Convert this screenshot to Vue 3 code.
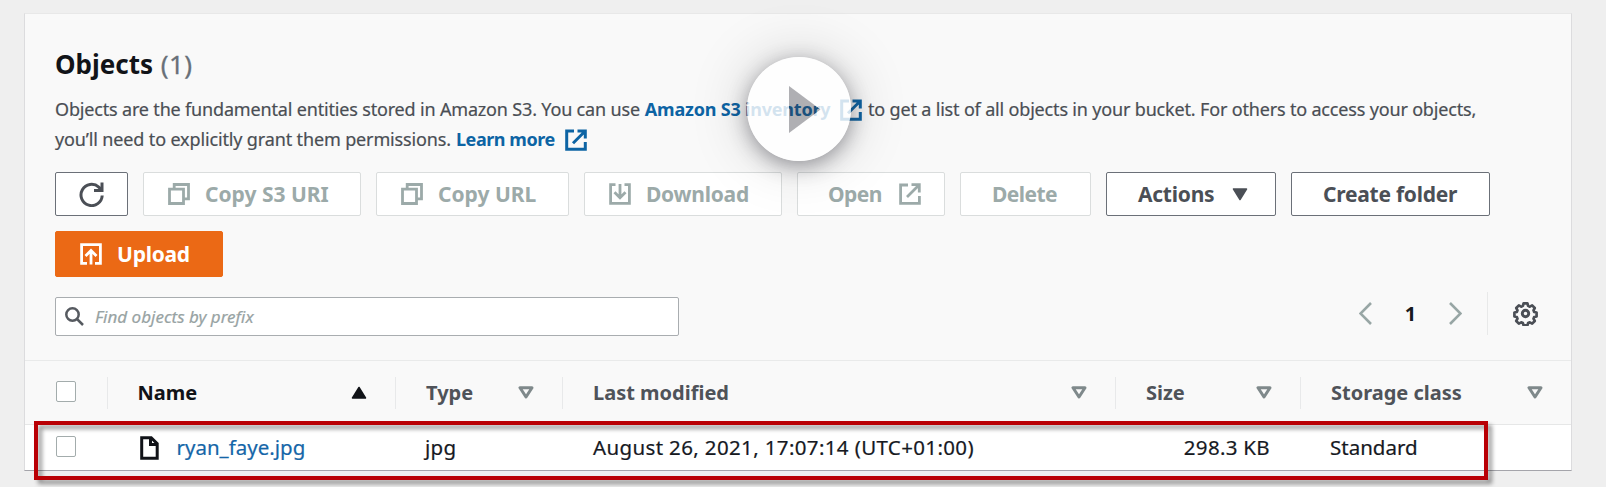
<script setup>
const columns = [
  { key: 'name', label: 'Name', sorted: true },
  { key: 'type', label: 'Type' },
  { key: 'modified', label: 'Last modified' },
  { key: 'size', label: 'Size' },
  { key: 'storage', label: 'Storage class' },
]
const rows = [
  { name: 'ryan_faye.jpg', type: 'jpg', modified: 'August 26, 2021, 17:07:14 (UTC+01:00)', size: '298.3 KB', storage: 'Standard' },
]
</script>

<template>
  <main class="page">
    <section class="panel">
      <header class="head">
        <h2>Objects <span class="count">(1)</span></h2>
        <p class="desc">
          <span class="t1">Objects are the fundamental entities stored in Amazon S3. You can use</span>
          <a class="inv">Amazon S3 inventory<svg class="ext" viewBox="0 0 22 22"><path d="M9 2H1.700v18.300h18.600V13M12.500 2h7.800v7.500M20 2.300 8 14.300" /></svg></a>
          <span class="t2">to get a list of all objects in your bucket. For others to access your objects,</span><br>
          <span class="t3">you’ll need to explicitly grant them permissions.</span>
          <a class="learn">Learn more<svg class="ext" viewBox="0 0 22 22"><path d="M9 2H1.700v18.300h18.600V13M12.500 2h7.800v7.500M20 2.300 8 14.300" /></svg></a>
        </p>
        <div class="actions">
          <button class="btn refresh"><svg class="i25" viewBox="0 0 25 25"><path d="M23.200 13.500A10.600 10.600 0 1 1 19.800 5.200L22 7.500M23 .5v8h-8" /></svg></button>
          <button class="btn off w218"><svg class="i22" viewBox="0 0 22 22"><path d="M1.500 6.200h14v14.300h-14zM6.200 6V1.500h14.300v14.300h-4.500" /></svg><span class="wide">Copy S3 URI</span></button>
          <button class="btn off w193"><svg class="i22" viewBox="0 0 22 22"><path d="M1.500 6.200h14v14.300h-14zM6.200 6V1.500h14.300v14.300h-4.500" /></svg><span class="wide">Copy URL</span></button>
          <button class="btn off w198"><svg class="i22" viewBox="0 0 22 22"><path d="M6.500 1.700H1.600v18.700h18.800V1.700h-4.900M11 1v13.500M5.500 9.300l5.500 5.500 5.500-5.500" /></svg><span>Download</span></button>
          <button class="btn off w148 text"><span class="tight">Open</span><svg class="i22" viewBox="0 0 22 22"><path d="M9 2H1.600v18.400h18.800V13M12.500 1.700h7.800v7.800M20 2 8 14" /></svg></button>
          <button class="btn off w131 text"><span class="tight">Delete</span></button>
          <button class="btn w170 text"><span>Actions</span><svg class="caret" viewBox="0 0 16 13"><path d="M1.500 1h13L8 11.500z" /></svg></button>
          <button class="btn w199 text"><span>Create folder</span></button>
          <button class="btn primary"><svg class="i22" viewBox="0 0 22 22"><path d="M7 20.300H1.600V1.700h18.800v18.600H15M11 21.500V8M5.500 13l5.500-5.500 5.500 5.500" /></svg><span>Upload</span></button>
        </div>
        <div class="tools">
          <label class="search"><svg viewBox="0 0 19 19"><circle cx="7.500" cy="7.500" r="6.200" /><path d="m12 12 6 6" /></svg><span>Find objects by prefix</span></label>
          <nav class="pager">
            <svg class="chev" viewBox="0 0 13 23"><path d="M12 1 1.500 11.500 12 22" /></svg>
            <b>1</b>
            <svg class="chev" viewBox="0 0 13 23"><path d="M1 1l10.500 10.500L1 22" /></svg>
            <i class="bar"></i>
            <svg class="gear" viewBox="0 0 24 24"><path d="M10 1.500h4l.7 2.600 1.800.8 2.400-1.300 2.700 2.700-1.300 2.400.7 1.700 2.500.6v4l-2.500.7-.7 1.700 1.300 2.400-2.700 2.700-2.400-1.300-1.800.7-.7 2.500h-4l-.7-2.500-1.800-.7-2.400 1.300-2.700-2.700 1.300-2.400-.7-1.700-2.500-.7v-4l2.500-.6.7-1.700-1.300-2.400 2.700-2.700 2.400 1.300 1.800-.8z" transform="translate(.9 .9) scale(.925)" /><circle cx="12" cy="12" r="3.100" /></svg>
          </nav>
        </div>
      </header>

      <div class="grid thead">
        <div class="cell first"><i class="box"></i></div>
        <div v-for="c in columns" :key="c.key" class="cell" :class="{ sorted: c.sorted }">
          <span>{{ c.label }}</span>
          <svg class="sort" viewBox="0 0 16 13"><path v-if="c.sorted" d="M8 1.500 14.500 12h-13z" /><path v-else d="M2 1.700h12L8 11z" /></svg>
        </div>
      </div>
      <div v-for="r in rows" :key="r.name" class="grid row">
        <div class="first"><i class="box"></i></div>
        <div class="name"><svg viewBox="0 0 19 24"><path d="M1.700 1.700h9.500l6 6v14.600H1.700zM10.500 2v6.500H17" /></svg><a>{{ r.name }}</a></div>
        <div class="type">{{ r.type }}</div>
        <div class="date">{{ r.modified }}</div>
        <div class="size">{{ r.size }}</div>
        <div class="storage">{{ r.storage }}</div>
      </div>
    </section>

    <div class="highlight"></div>
    <div class="play">
      <svg viewBox="0 0 104 104">
        <path class="disc" fill-rule="evenodd" d="M52 0a52 52 0 1 1 0 104A52 52 0 1 1 52 0zM42 29v47l31.500-23.500z" />
        <path class="tri" d="M42 29v47l31.500-23.500z" />
      </svg>
    </div>
  </main>
</template>

<style>
body { background: #efefef; }
</style>

<style scoped>
* { box-sizing: border-box; }
.page { position: relative; height: 487px; overflow: hidden; padding: 13px 34px 0 24px; background: #efefef; font-family: "Noto Sans", sans-serif; color: #16191f; }
.panel { height: 458px; border: 1px solid #dcdcde; border-top-color: #e8e8e8; border-bottom: 1.500px solid #a4a4aa; background: #f9f9f9; }
svg { display: block; flex: none; fill: none; stroke: currentColor; }
.head { height: 347px; padding: 32px 30px 0; border-bottom: 1px solid #e9eaea; }
h2 { margin: 0; font-size: 26px; line-height: 36px; font-weight: 700; color: #111318; letter-spacing: 0; }
.count { margin-left: 1px; font-weight: 400; color: #687078; letter-spacing: .4px; -webkit-text-stroke: .3px; }
.desc { margin: 12px 0 0; font-size: 18px; line-height: 30px; color: #4a4e54; white-space: nowrap; }
.t1, .t2, .t3 { -webkit-text-stroke: .2px; }
.t1 { letter-spacing: -.17px; }
.t2 { margin-left: 4.500px; letter-spacing: -.17px; }
.t3 { letter-spacing: -.14px; }
.desc a { margin-left: 5px; color: #0d64a4; font-weight: 700; letter-spacing: -.2px; }
.desc a.learn { letter-spacing: -.45px; }
.ext { display: inline-block; width: 22px; height: 22px; margin: 0 1px 0 10px; vertical-align: -5px; stroke-width: 3; }
.actions { display: flex; flex-wrap: wrap; gap: 15px; margin-top: 18px; width: 1436px; }
.btn { display: flex; align-items: center; height: 44px; margin: 0; padding: 0 0 0 24px; gap: 15px; border: 1px solid #6b7078; border-radius: 2px; background: #fff; color: #4b4f56; font: 700 21px/42px "Noto Sans", sans-serif; letter-spacing: -.25px; white-space: nowrap; }
.btn.text { padding-left: 31px; }
.btn.off { color: #9caaa9; border-color: #dadddd; }
.wide { letter-spacing: 0; }
.tight { letter-spacing: -.55px; }
.refresh { width: 73px; padding-left: 23px; }
.w218 { width: 218px; }
.w193 { width: 193px; }
.w198 { width: 198px; }
.btn.w148 { width: 148px; padding-left: 30px; gap: 17px; }
.w131 { width: 131px; }
.w170 { width: 170px; gap: 18px; }
.w199 { width: 199px; }
.primary { width: 168px; height: 46px; border-color: #eb6915; background: #eb6915; color: #fff; }
.i25 { width: 25px; height: 25px; stroke-width: 3; }
.i22 { width: 22px; height: 22px; stroke-width: 2.800; }
.caret { width: 16px; height: 13px; fill: currentColor; stroke-width: 1.500; stroke-linejoin: round; }
.tools { display: flex; justify-content: space-between; align-items: flex-start; margin-top: 20px; }
.search { display: flex; align-items: center; width: 624px; height: 39px; padding-left: 9px; gap: 11px; border: 1px solid #a9adb0; border-radius: 2px; background: #fff; color: #98a3a3; font-size: 17px; font-style: italic; letter-spacing: 0; -webkit-text-stroke: .2px; }
.search svg { width: 19px; height: 19px; color: #565a60; stroke-width: 2.500; }
.pager { display: flex; align-items: center; height: 43px; margin: -5px 3px 0 0; font-size: 20px; }
.chev { width: 13px; height: 23px; color: #98a6a5; stroke-width: 2.600; }
.pager b { width: 77px; text-align: center; }
.bar { width: 1px; height: 43px; margin: 0 25px; background: #e8e9e9; }
.gear { width: 25px; height: 25px; color: #4b4f56; stroke-width: 2.800; stroke-linejoin: round; }
.grid { display: grid; grid-template-columns: 82.500px 288.500px 167px 553px 185px 1fr; align-items: center; }
.thead { height: 64px; border-bottom: 1px solid #e6e7e7; font-size: 20px; font-weight: 700; color: #4f5359; }
.cell { display: flex; align-items: center; justify-content: space-between; height: 32px; padding: 0 28px 0 30px; border-right: 1px solid #e8e9ea; }
.cell:last-child { border-right: 0; }
.cell.sorted { color: #111318; }
.sort { width: 16px; height: 13px; color: #7f898b; stroke-width: 3; stroke-linejoin: round; }
.sorted .sort { color: #111318; fill: currentColor; stroke-width: 1.500; }
.first { padding-left: 31px; }
.box { display: block; width: 20px; height: 21px; margin-top: -2px; border: 1.500px solid #a3acac; border-radius: 2px; background: #fff; }
.row { height: 45px; background: #fff; font-size: 20.500px; line-height: 45px; white-space: nowrap; -webkit-text-stroke: .2px; }
.name { display: flex; align-items: center; gap: 18px; padding-left: 32px; color: #111318; }
.name svg { width: 19px; height: 24px; stroke-width: 3; }
.name a { color: #1566a8; }
.type { padding-left: 29px; letter-spacing: .3px; }
.date { padding-left: 30px; letter-spacing: .36px; }
.size { padding-right: 31px; text-align: right; letter-spacing: .3px; }
.storage { padding-left: 29px; }
.highlight { position: absolute; left: 34px; top: 421px; width: 1454px; height: 59px; border: 4px solid #b90005; filter: drop-shadow(4px 4px 2px rgba(0, 0, 0, .4)); }
.play { position: absolute; left: 746.500px; top: 57px; width: 104px; height: 104px; border-radius: 50%; box-shadow: 0 5px 20px rgba(50, 50, 62, .45), 0 0 60px rgba(0, 0, 0, .18); }
.play svg { width: 104px; height: 104px; stroke: none; }
.disc { fill: #fff; fill-opacity: .82; }
.tri { fill: #32323c; fill-opacity: .37; }
</style>
